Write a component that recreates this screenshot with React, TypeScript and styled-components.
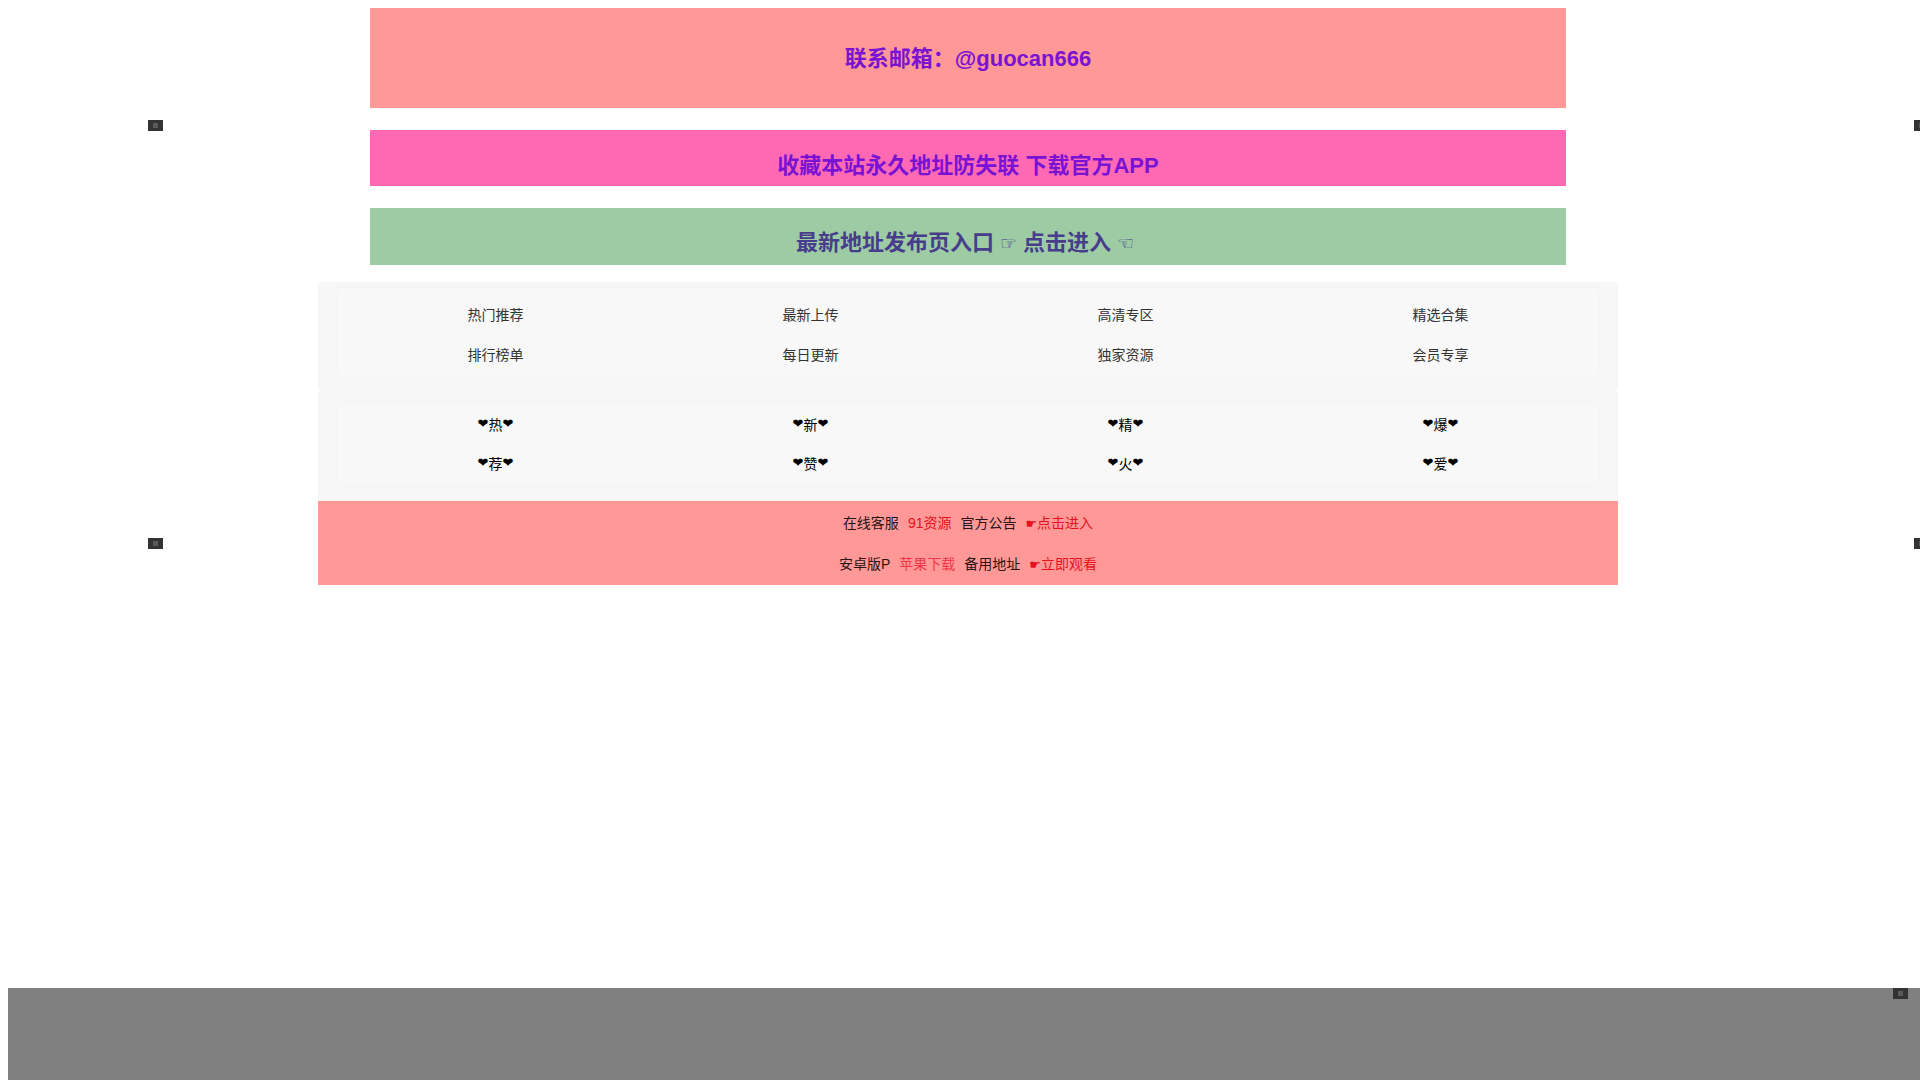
import React from 'react';
import styled, {createGlobalStyle} from "styled-components";

const GlobalStyle = createGlobalStyle`
    html, body {
        background: #fff;
    }
    body {
        margin: 8px 0 0 16px;
        font-family: "Liberation Sans", Arial, "Noto Sans CJK SC", "DejaVu Sans", sans-serif;
        color: #333;
    }
`;

const Page = styled.div`
    width: 1300px;
    margin: 0 auto;
`;

const Banner = styled.div<{ $bg: string; $color: string; $pad: string; $gap: number }>`
    width: 92%;
    margin: 0 auto ${p => p.$gap}px auto;
    box-sizing: border-box;
    background-color: ${p => p.$bg};
    color: ${p => p.$color};
    padding: ${p => p.$pad};
    text-align: center;
    font-size: 22px;
    line-height: 25px;
    font-weight: bold;
    &.tall {
        height: 100px;
        display: flex;
        align-items: center;
        justify-content: center;
    }
`;

const Hand = styled.span`
    font-family: "DejaVu Sans", sans-serif;
    font-weight: normal;
    font-size: 19px;
    margin: 0 6px;
`;

const Panel = styled.div<{ $pad: string }>`
    background-color: #f7f7f7;
    border-radius: 4px;
    padding: ${p => p.$pad};
`;

const Grid = styled.div<{ $pad: string; $row: number }>`
    display: grid;
    grid-template-columns: repeat(4, 1fr);
    grid-auto-rows: ${p => p.$row}px;
    padding: ${p => p.$pad};
    background-color: #f8f8f8;
    box-shadow: 0 0 2px rgba(0, 0, 0, 0.04);
`;

const Cell = styled.a<{ $dark?: boolean }>`
    display: flex;
    align-items: center;
    justify-content: center;
    font-size: 14px;
    color: ${p => p.$dark ? '#000' : '#333'};
    text-decoration: none;
    cursor: pointer;
`;

const Heart = styled.span`
    font-family: "DejaVu Sans", sans-serif;
    font-size: 13px;
`;

const LinkBar = styled.div`
    background-color: #ff9896;
    padding-bottom: 2px;
`;

const LinkRow = styled.div`
    display: flex;
    justify-content: center;
    align-items: center;
    gap: 9px;
    height: 41px;
`;

const LinkItem = styled.a<{ $color: string }>`
    font-size: 14px;
    color: ${p => p.$color};
    text-decoration: none;
    cursor: pointer;
    > span {
        font-family: "DejaVu Sans", sans-serif;
        font-size: 13px;
    }
`;

const CloseBox = styled.div`
    width: 15px;
    height: 11px;
    background-color: #333;
    display: flex;
    align-items: center;
    justify-content: center;
    cursor: pointer;
    &::after {
        content: "";
        width: 5px;
        height: 5px;
        background-color: #5a5a5a;
    }
`;

const FloatColumn = styled.div<{ $left: number }>`
    position: fixed;
    top: 120px;
    left: ${p => p.$left}px;
    height: 429px;
    display: flex;
    flex-direction: column;
    justify-content: space-between;
`;

const BottomAd = styled.div`
    position: fixed;
    left: 8px;
    right: 0;
    bottom: 0;
    height: 92px;
    background-color: #808080;
    > ${CloseBox} {
        position: absolute;
        top: 0;
        right: 12px;
    }
`;

const topCells = ['热门推荐', '最新上传', '高清专区', '精选合集', '排行榜单', '每日更新', '独家资源', '会员专享'];
const heartCells = ['热', '新', '精', '爆', '荐', '赞', '火', '爱'];

const linkRows = [
    [
        {text: '在线客服', color: '#2a1414'},
        {text: '91资源', color: '#e8101c'},
        {text: '官方公告', color: '#2a1414'},
        {text: '点击进入', color: '#e8101c', hand: true},
    ],
    [
        {text: '安卓版P', color: '#2a1414'},
        {text: '苹果下载', color: '#f0364a'},
        {text: '备用地址', color: '#2a1414'},
        {text: '立即观看', color: '#e8101c', hand: true},
    ],
];

function FloatCouplet(props: { left: number }) {
    return <FloatColumn $left={props.left}>
        <CloseBox/>
        <CloseBox/>
    </FloatColumn>;
}

function App() {
    return <>
        <GlobalStyle/>
        <Page>
            <Banner className={'tall'} $bg={'#ff9896'} $color={'#7a12d4'} $pad={'0'} $gap={22}>
                联系邮箱：@guocan666
            </Banner>
            <Banner $bg={'#ff69b4'} $color={'#7a12d4'} $pad={'23px 0 8px'} $gap={22}>
                收藏本站永久地址防失联 下载官方APP
            </Banner>
            <Banner $bg={'#9dcba4'} $color={'#483d8b'} $pad={'22px 0 9px'} $gap={17}>
                最新地址发布页入口<Hand>☞</Hand>点击进入<Hand>☜</Hand>
            </Banner>

            <Panel $pad={'6px 20px 14px'}>
                <Grid $pad={'6px 0 2px'} $row={40}>
                    {topCells.map((text, index) => <Cell key={index}>{text}</Cell>)}
                </Grid>
            </Panel>
            <Panel $pad={'14px 20px 17px'}>
                <Grid $pad={'0 0 2px'} $row={39}>
                    {heartCells.map((text, index) => <Cell key={index} $dark>
                        <Heart>❤</Heart>{text}<Heart>❤</Heart>
                    </Cell>)}
                </Grid>
            </Panel>

            <LinkBar>
                {linkRows.map((row, rIndex) => <LinkRow key={rIndex}>
                    {row.map((item, index) => <LinkItem key={index} $color={item.color}>
                        {item.hand ? <span>☛</span> : null}{item.text}
                    </LinkItem>)}
                </LinkRow>)}
            </LinkBar>
        </Page>

        <FloatCouplet left={148}/>
        <FloatCouplet left={1914}/>
        <BottomAd><CloseBox/></BottomAd>
    </>;
}

export default App;
